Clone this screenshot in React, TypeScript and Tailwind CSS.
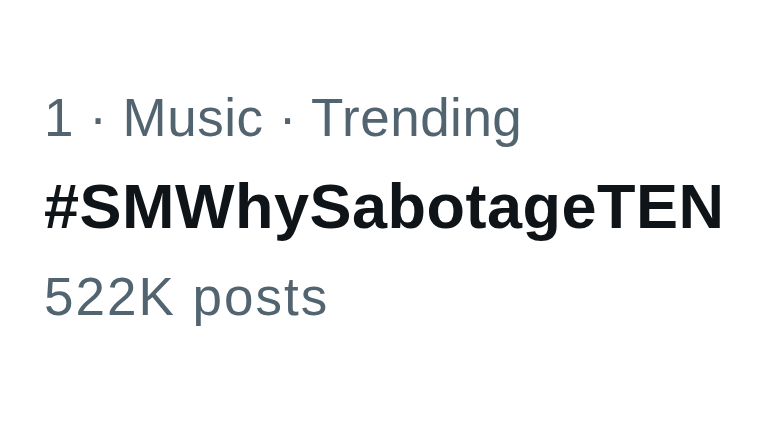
export default function App() {
  return (
    <div className="min-h-screen w-full bg-white pl-[44px] pt-[73px] font-['Liberation_Sans',Arial,sans-serif]">
      <div className="text-[53px] leading-[90px] tracking-[0.5px] text-[#536471]">1 · Music · Trending</div>
      <div className="-mt-[2px] text-[63px] font-bold leading-[90px] tracking-[0.5px] text-[#0f1419]">#SMWhySabotageTEN</div>
      <div className="mt-[1px] text-[53px] leading-[90px] tracking-[2px] text-[#536471]">522K posts</div>
    </div>
  );
}
